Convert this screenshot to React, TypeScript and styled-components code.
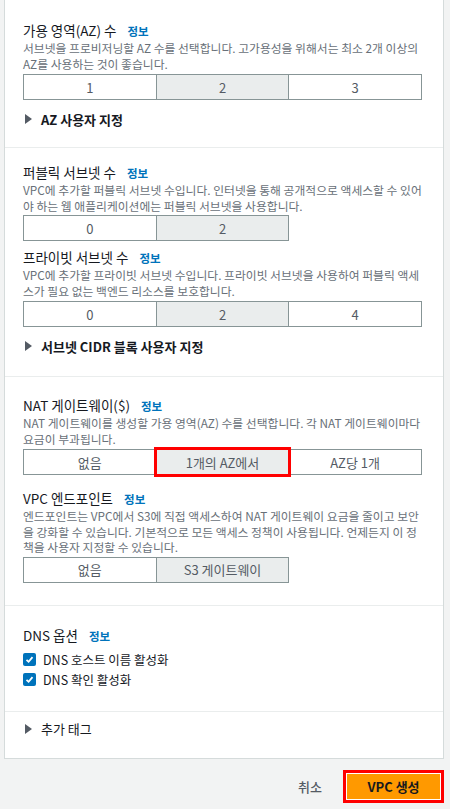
import React from "react";
import styled, { createGlobalStyle } from "styled-components";

const GlobalStyle = createGlobalStyle`
  body {
    margin: 0;
    background: #f2f3f3;
    font-family: "Noto Sans CJK KR", "Noto Sans", sans-serif;
    color: #16191f;
  }
`;

const Page = styled.div`
  width: 450px;
  padding-bottom: 4px;
`;

const Card = styled.div`
  box-sizing: border-box;
  margin-left: 4px;
  width: 440px;
  background: #fff;
  border: 1px solid #d5dbdb;
  border-top: none;
`;

const Section = styled.div<{ $pt: number; $pb: number; $first?: boolean }>`
  padding: ${(p) => p.$pt}px 21px ${(p) => p.$pb}px 18px;
  border-top: ${(p) => (p.$first ? "none" : "1px solid #eaeded")};
`;

const Field = styled.div<{ $mt?: number }>`
  margin-top: ${(p) => p.$mt ?? 0}px;
`;

const Label = styled.div`
  height: 20px;
  font-size: 13.5px;
  line-height: 20px;
  color: #16191f;
  white-space: nowrap;
`;

const Info = styled.span`
  margin-left: 11px;
  font-size: 11.5px;
  line-height: 1;
  font-weight: bold;
  color: #0073bb;
`;

const Description = styled.div`
  font-size: 11.8px;
  line-height: 15.5px;
  color: #687078;
`;

const Segmented = styled.div<{ $mt: number }>`
  display: grid;
  grid-template-columns: repeat(3, 1fr);
  margin-top: ${(p) => p.$mt}px;
  padding-left: 1px;
`;

const Segment = styled.div<{ $selected?: boolean; $marked?: boolean }>`
  position: relative;
  z-index: ${(p) => (p.$marked ? 1 : 0)};
  margin-left: -1px;
  height: 24px;
  display: flex;
  align-items: center;
  justify-content: center;
  border: 1px solid #879596;
  background: ${(p) => (p.$selected ? "#eaeded" : "#fff")};
  font-size: 13px;
  color: #545b64;
  outline: ${(p) => (p.$marked ? "3px solid #ff0000" : "none")};
  outline-offset: -1px;
`;

const Expander = styled.div<{ $mt: number; $bold?: boolean }>`
  display: flex;
  align-items: center;
  gap: 9px;
  height: 20px;
  margin-top: ${(p) => p.$mt}px;
  padding-left: 2px;
  font-size: 13px;
  font-weight: ${(p) => (p.$bold ? "bold" : "normal")};
  color: #16191f;
`;

const CheckRow = styled.label<{ $mt: number }>`
  display: flex;
  align-items: center;
  gap: 7px;
  height: 19px;
  margin-top: ${(p) => p.$mt}px;
  font-size: 12.5px;
  color: #16191f;
`;

const Box = styled.span`
  width: 13px;
  height: 13px;
  border-radius: 2px;
  background: #0073bb;
  display: flex;
  align-items: center;
  justify-content: center;
`;

const Footer = styled.div`
  display: flex;
  justify-content: flex-end;
  align-items: center;
  gap: 21px;
  margin-top: 11px;
  padding-right: 6px;
`;

const Cancel = styled.span`
  font-size: 13px;
  color: #545b64;
  font-weight: 500;
`;

const Highlight = styled.div`
  border: 3px solid #ff0000;
  padding: 1px;
  background: #fff;
`;

const Primary = styled.button`
  display: block;
  width: 93px;
  height: 25px;
  border: none;
  background: #ff9900;
  font-family: inherit;
  font-size: 13px;
  font-weight: bold;
  color: #16191f;
  padding: 0;
`;

const Caret = () => (
  <svg width="7" height="10" viewBox="0 0 7 10">
    <polygon points="0,0 7,5 0,10" fill="#545b64" />
  </svg>
);

const Check = () => (
  <svg width="9" height="9" viewBox="0 0 9 9">
    <polyline points="1.5,4.8 3.6,6.8 7.5,2.2" fill="none" stroke="#fff" strokeWidth="1.8" />
  </svg>
);

const Options: React.FC<{ items: string[]; selected: number; marked?: number; mt: number }> = ({
  items,
  selected,
  marked,
  mt,
}) => (
  <Segmented $mt={mt}>
    {items.map((item, i) => (
      <Segment key={item + i} $selected={i === selected} $marked={i === marked}>
        {item}
      </Segment>
    ))}
  </Segmented>
);

const App: React.FC = () => {
  return (
    <Page>
      <GlobalStyle />
      <Card>
        <Section $pt={20} $pb={18} $first>
          <Label>
            가용 영역(AZ) 수<Info>정보</Info>
          </Label>
          <Description>
            서브넷을 프로비저닝할 AZ 수를 선택합니다. 고가용성을 위해서는 최소 2개 이상의 AZ를 사용하는 것이
            좋습니다.
          </Description>
          <Options items={["1", "2", "3"]} selected={1} mt={3} />
          <Expander $mt={9} $bold>
            <Caret />
            AZ 사용자 지정
          </Expander>
        </Section>

        <Section $pt={14} $pb={20}>
          <Field>
            <Label>
              퍼블릭 서브넷 수<Info>정보</Info>
            </Label>
            <Description>
              VPC에 추가할 퍼블릭 서브넷 수입니다. 인터넷을 통해 공개적으로 액세스할 수 있어야 하는 웹
              애플리케이션에는 퍼블릭 서브넷을 사용합니다.
            </Description>
            <Options items={["0", "2"]} selected={1} mt={2} />
          </Field>
          <Field $mt={6}>
            <Label>
              프라이빗 서브넷 수<Info>정보</Info>
            </Label>
            <Description>
              VPC에 추가할 프라이빗 서브넷 수입니다. 프라이빗 서브넷을 사용하여 퍼블릭 액세스가 필요 없는 백엔드
              리소스를 보호합니다.
            </Description>
            <Options items={["0", "2", "4"]} selected={1} mt={3} />
          </Field>
          <Expander $mt={9} $bold>
            <Caret />
            서브넷 CIDR 블록 사용자 지정
          </Expander>
        </Section>

        <Section $pt={18} $pb={22}>
          <Field>
            <Label>
              NAT 게이트웨이($)<Info>정보</Info>
            </Label>
            <Description>
              NAT 게이트웨이를 생성할 가용 영역(AZ) 수를 선택합니다. 각 NAT 게이트웨이마다 요금이 부과됩니다.
            </Description>
            <Options items={["없음", "1개의 AZ에서", "AZ당 1개"]} selected={1} marked={1} mt={3} />
          </Field>
          <Field $mt={13}>
            <Label>
              VPC 엔드포인트<Info>정보</Info>
            </Label>
            <Description>
              엔드포인트는 VPC에서 S3에 직접 액세스하여 NAT 게이트웨이 요금을 줄이고 보안을 강화할 수 있습니다.
              기본적으로 모든 액세스 정책이 사용됩니다. 언제든지 이 정책을 사용자 지정할 수 있습니다.
            </Description>
            <Options items={["없음", "S3 게이트웨이"]} selected={1} mt={2} />
          </Field>
        </Section>

        <Section $pt={19} $pb={22}>
          <Label>
            DNS 옵션<Info>정보</Info>
          </Label>
          <CheckRow $mt={5}>
            <Box>
              <Check />
            </Box>
            DNS 호스트 이름 활성화
          </CheckRow>
          <CheckRow $mt={1}>
            <Box>
              <Check />
            </Box>
            DNS 확인 활성화
          </CheckRow>
        </Section>

        <Section $pt={7} $pb={19}>
          <Expander $mt={0}>
            <Caret />
            추가 태그
          </Expander>
        </Section>
      </Card>
      <Footer>
        <Cancel>취소</Cancel>
        <Highlight>
          <Primary>VPC 생성</Primary>
        </Highlight>
      </Footer>
    </Page>
  );
};

export default App;
